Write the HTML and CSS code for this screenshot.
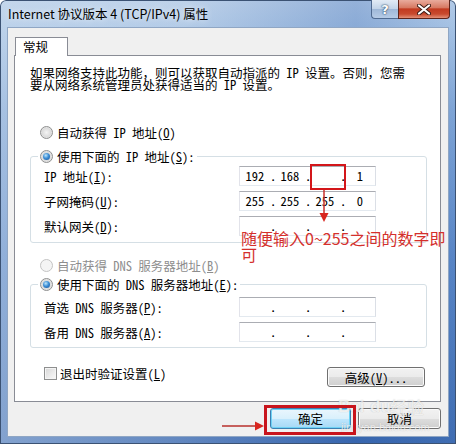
FILE: index.html
```html
<!DOCTYPE html>
<html lang="zh-CN">
<head>
<meta charset="utf-8">
<title>Internet 协议版本 4 (TCP/IPv4) 属性</title>
<link rel="stylesheet" href="styles.css">
</head>
<body>
<div class="window">
  <div class="titlebar">
    <span class="title">Internet 协议版本 4 (TCP/IPv4) 属性</span>
    <div class="caption-btns">
      <span class="cbtn help">?</span>
      <span class="cbtn close">
        <svg width="14" height="11" viewBox="0 0 14 11"><path d="M2 1.5 L12 9.5 M12 1.5 L2 9.5" stroke="#3a1a14" stroke-width="4" stroke-linecap="round"/><path d="M2 1.5 L12 9.5 M12 1.5 L2 9.5" stroke="#ffffff" stroke-width="2.2" stroke-linecap="round"/></svg>
      </span>
    </div>
  </div>
  <div class="client">
    <div class="tabs"><span class="tab">常规</span></div>
    <div class="panel">
      <p class="intro">如果网络支持此功能，则可以获取自动指派的 IP 设置。否则，您需<br>要从网络系统管理员处获得适当的 IP 设置。</p>
      <div class="radio-row r-first"><span class="radio"></span><span>自动获得 IP 地址(<u>O</u>)</span></div>
      <div class="group g-ip">
        <div class="legend"><span class="radio checked"></span><span>使用下面的 IP 地址(<u>S</u>):</span></div>
        <div class="fields f-ip">
          <div class="field"><span class="flabel">IP 地址(<u>I</u>):</span><span class="ipbox"><span class="seg">192</span><span class="dot">.</span><span class="seg">168</span><span class="dot">.</span><span class="seg"></span><span class="dot">.</span><span class="seg">1</span></span></div>
          <div class="field"><span class="flabel">子网掩码(<u>U</u>):</span><span class="ipbox"><span class="seg">255</span><span class="dot">.</span><span class="seg">255</span><span class="dot">.</span><span class="seg">255</span><span class="dot">.</span><span class="seg">0</span></span></div>
          <div class="field"><span class="flabel">默认网关(<u>D</u>):</span><span class="ipbox"><span class="seg"></span><span class="dot">.</span><span class="seg"></span><span class="dot">.</span><span class="seg"></span><span class="dot">.</span><span class="seg"></span></span></div>
        </div>
      </div>
      <div class="radio-row r-dns disabled"><span class="radio"></span><span>自动获得 DNS 服务器地址(<u>B</u>)</span></div>
      <div class="group g-dns">
        <div class="legend"><span class="radio checked"></span><span>使用下面的 DNS 服务器地址(<u>E</u>):</span></div>
        <div class="fields f-dns">
          <div class="field"><span class="flabel">首选 DNS 服务器(<u>P</u>):</span><span class="ipbox"><span class="seg"></span><span class="dot">.</span><span class="seg"></span><span class="dot">.</span><span class="seg"></span><span class="dot">.</span><span class="seg"></span></span></div>
          <div class="field"><span class="flabel">备用 DNS 服务器(<u>A</u>):</span><span class="ipbox"><span class="seg"></span><span class="dot">.</span><span class="seg"></span><span class="dot">.</span><span class="seg"></span><span class="dot">.</span><span class="seg"></span></span></div>
        </div>
      </div>
      <div class="bottom-row">
        <div class="check-row"><span class="checkbox"></span><span>退出时验证设置(<u>L</u>)</span></div>
        <span class="btn adv">高级(<u>V</u>)...</span>
      </div>
    </div>
    <div class="buttons">
      <span class="btn default ok">确定</span>
      <span class="btn cancel">取消</span>
    </div>
  </div>

  <div class="mark-box mark-ip"></div>
  <svg class="arrow-down" width="12" height="33" viewBox="0 0 12 33"><line x1="6" y1="0" x2="6" y2="24" stroke="#c9302c" stroke-width="1.5"/><polygon points="1.5,23 10.5,23 6,32" fill="#d8261f"/></svg>
  <div class="note">随便输入0~255之间的数字即<br>可</div>
  <div class="watermark"><span class="wm-bai">Bai</span><span class="wm-du">du</span><span class="wm-jy">经验</span><span class="wm-url">jingyan.baidu.com</span></div>
  <div class="mark-box mark-ok"></div>
  <svg class="arrow-right" width="43" height="12" viewBox="0 0 43 12"><line x1="0" y1="6" x2="35" y2="6" stroke="#b8302c" stroke-width="1.5"/><polygon points="33,1.5 33,10.5 42,6" fill="#d8261f"/></svg>
</div>
</body>
</html>
```

FILE: styles.css
```css
html, body {
  margin: 0;
  padding: 0;
  background: #ffffff;
}

.window {
  position: relative;
  width: 456px;
  height: 444px;
  box-sizing: border-box;
  padding: 0 7px 7px;
  display: flex;
  flex-direction: column;
  overflow: hidden;
  border-radius: 6px 6px 0 0;
  background:
    linear-gradient(90deg, rgba(200,218,238,0.55) 0%, rgba(190,210,234,0.35) 40%, rgba(70,115,185,0.35) 78%, rgba(130,170,220,0.2) 100%),
    linear-gradient(180deg, #bfd3ea 0px, #aec8e6 27px, #7ea3d4 110px, #4e7cc0 260px, #2f5ea8 444px);
  box-shadow: inset 0 0 0 1px #3b5273;
  font-family: "Noto Sans Mono CJK SC", "Noto Sans CJK SC", sans-serif;
  font-size: 12.5px;
  color: #000;
}

/* title bar */
.titlebar {
  height: 27px;
  margin: 0 -7px;
  padding: 0 6px 0 8px;
  display: flex;
  align-items: center;
}
.title {
  font-family: "Noto Sans CJK SC", sans-serif;
  font-size: 12.5px;
  line-height: 16px;
  color: #000;
  text-shadow: 0 0 6px rgba(255,255,255,0.9);
}
.caption-btns {
  margin-left: auto;
  align-self: flex-start;
  display: flex;
}
.cbtn {
  height: 19px;
  box-sizing: border-box;
  display: flex;
  align-items: center;
  justify-content: center;
}
.help {
  width: 27px;
  border: 1px solid #4f6a90;
  border-top: none;
  border-right: none;
  border-radius: 0 0 0 4px;
  background: linear-gradient(180deg, #e2ebf5 0%, #c3d4e8 48%, #9fb8d8 52%, #b6cbe6 100%);
  color: #fff;
  font-family: "DejaVu Sans", sans-serif;
  font-weight: bold;
  font-size: 13px;
  text-shadow: 0 0 2px #25405f, 0 0 1px #25405f;
}
.close {
  width: 52px;
  border: 1px solid #5e241b;
  border-top: none;
  border-radius: 0 0 4px 0;
  background: linear-gradient(180deg, #e9ab9c 0%, #d77a63 42%, #c23a20 50%, #c84a2e 78%, #e39077 100%);
}

/* client area */
.client {
  flex: 1;
  background: #f0f0f0;
  border: 1px solid #8fa6c4;
  display: flex;
  flex-direction: column;
}
.tabs {
  padding: 9px 0 0 7px;
  display: flex;
}
.tab {
  position: relative;
  z-index: 1;
  width: 53px;
  height: 19px;
  box-sizing: border-box;
  margin-bottom: -1px;
  padding-left: 7px;
  border: 1px solid #898c95;
  border-bottom: none;
  background: #fff;
  line-height: 18px;
}
.panel {
  margin: 0 7px 0 6px;
  border: 1px solid #898c95;
  background: #fff;
  padding: 11px 13px 14px 15px;
}
.intro {
  margin: 0;
  line-height: 12px;
  white-space: nowrap;
}

/* radios */
.radio-row, .legend, .check-row {
  display: flex;
  align-items: center;
  height: 16px;
  gap: 4px;
  white-space: nowrap;
}
.radio-row {
  padding-left: 10px;
}
.r-first { margin-top: 33px; }
.r-dns { margin-top: 14px; }
.disabled { color: #8d8d8d; }

.radio {
  width: 13px;
  height: 13px;
  box-sizing: border-box;
  border-radius: 50%;
  border: 1px solid #8e8f8f;
  background: radial-gradient(circle at 50% 50%, #f4f4f4 0%, #dcdcdc 55%, #f7f7f7 100%);
  display: flex;
  align-items: center;
  justify-content: center;
}
.disabled .radio {
  border-color: #c4c4c4;
  background: #f4f4f4;
}
.radio.checked::after {
  content: "";
  width: 7px;
  height: 7px;
  border-radius: 50%;
  background: radial-gradient(circle at 40% 35%, #bfe6fb 0%, #3d8fd6 45%, #154d94 100%);
}

/* group boxes */
.group {
  border: 1px solid #d5dfe5;
  border-radius: 3px;
  padding: 0 5px 6px 13px;
}
.g-ip { margin-top: 16px; }
.g-dns { margin-top: 11px; padding-bottom: 5px; }
.legend {
  width: max-content;
  margin: -9px 0 0 -6px;
  padding: 0 2px;
  background: #fff;
}
.fields {
  display: flex;
  flex-direction: column;
  gap: 5px;
}
.f-ip { margin-top: 2px; }
.f-dns { margin-top: 5px; }
.field {
  display: flex;
  align-items: center;
  height: 20px;
}
.flabel {
  width: 195px;
  white-space: nowrap;
}
.ipbox {
  width: 137px;
  height: 20px;
  box-sizing: border-box;
  border: 1px solid;
  border-color: #abadb3 #dbdfe6 #e3e9ef #e2e3ea;
  background: #fff;
  display: flex;
  line-height: 18px;
}
.seg {
  width: 30px;
  text-align: center;
}
.dot {
  width: 5px;
  text-align: center;
}

/* bottom of panel */
.bottom-row {
  margin-top: 19px;
  padding-left: 14px;
  display: flex;
  align-items: flex-start;
  justify-content: space-between;
}
.check-row {
  height: 13px;
  gap: 3px;
}
.checkbox {
  width: 13px;
  height: 13px;
  box-sizing: border-box;
  border: 1px solid #8e8f8f;
  background: linear-gradient(135deg, #d6d6d6 0%, #ececec 60%, #fafafa 100%);
  box-shadow: inset 0 0 0 1px #f4f4f4;
}

/* buttons */
.btn {
  height: 20px;
  box-sizing: border-box;
  border: 1px solid #707070;
  border-radius: 3px;
  background: linear-gradient(180deg, #f2f2f2 0%, #ebebeb 50%, #dddddd 51%, #cfcfcf 100%);
  box-shadow: inset 0 0 0 1px #fbfbfb;
  display: flex;
  align-items: center;
  justify-content: center;
  white-space: nowrap;
}
.adv {
  width: 98px;
  margin-right: 2px;
}
.buttons {
  margin-top: 6px;
  padding-right: 7px;
  display: flex;
  justify-content: flex-end;
  gap: 7px;
}
.buttons .btn { height: 21px; }
.ok { width: 81px; }
.cancel { width: 83px; }
.btn.default {
  border-color: #3c7fb1;
  background: linear-gradient(180deg, #eaf6fd 0%, #d9f0fc 50%, #bee6fd 51%, #a7d9f5 100%);
  box-shadow: inset 0 0 0 1px #6ed2f5;
}

/* annotations (overlay) */
.mark-box {
  position: absolute;
  box-sizing: border-box;
  pointer-events: none;
}
.mark-ip {
  left: 310px;
  top: 164px;
  width: 36px;
  height: 26px;
  border: 2px solid #d3161a;
}
.mark-ok {
  left: 264px;
  top: 405px;
  width: 92px;
  height: 30px;
  border: 3px solid #c8141c;
}
.arrow-down {
  position: absolute;
  left: 318px;
  top: 190px;
}
.arrow-right {
  position: absolute;
  left: 222px;
  top: 420px;
}
.note {
  position: absolute;
  left: 241px;
  top: 230px;
  font-family: "Noto Sans CJK SC", sans-serif;
  font-size: 16px;
  line-height: 16px;
  color: #d4302c;
  white-space: nowrap;
}
.watermark {
  position: absolute;
  left: 336px;
  top: 396px;
  width: 96px;
  height: 40px;
  pointer-events: none;
  color: rgba(255,255,255,0.75);
  text-shadow: 0 0 1px rgba(90,90,90,0.35);
  font-family: "Liberation Sans", "Noto Sans CJK SC", sans-serif;
}
.wm-bai, .wm-du, .wm-jy, .wm-url {
  position: absolute;
}
.wm-bai { left: 2px; top: 2px; font-size: 17px; font-weight: bold; line-height: 18px; }
.wm-du { left: 34px; top: 2px; font-size: 17px; font-weight: bold; line-height: 18px; }
.wm-jy { left: 54px; top: 2px; font-size: 17px; line-height: 18px; font-family: "Noto Sans CJK SC", sans-serif; }
.wm-url { left: 5px; top: 25px; font-size: 11px; line-height: 12px; }
```
